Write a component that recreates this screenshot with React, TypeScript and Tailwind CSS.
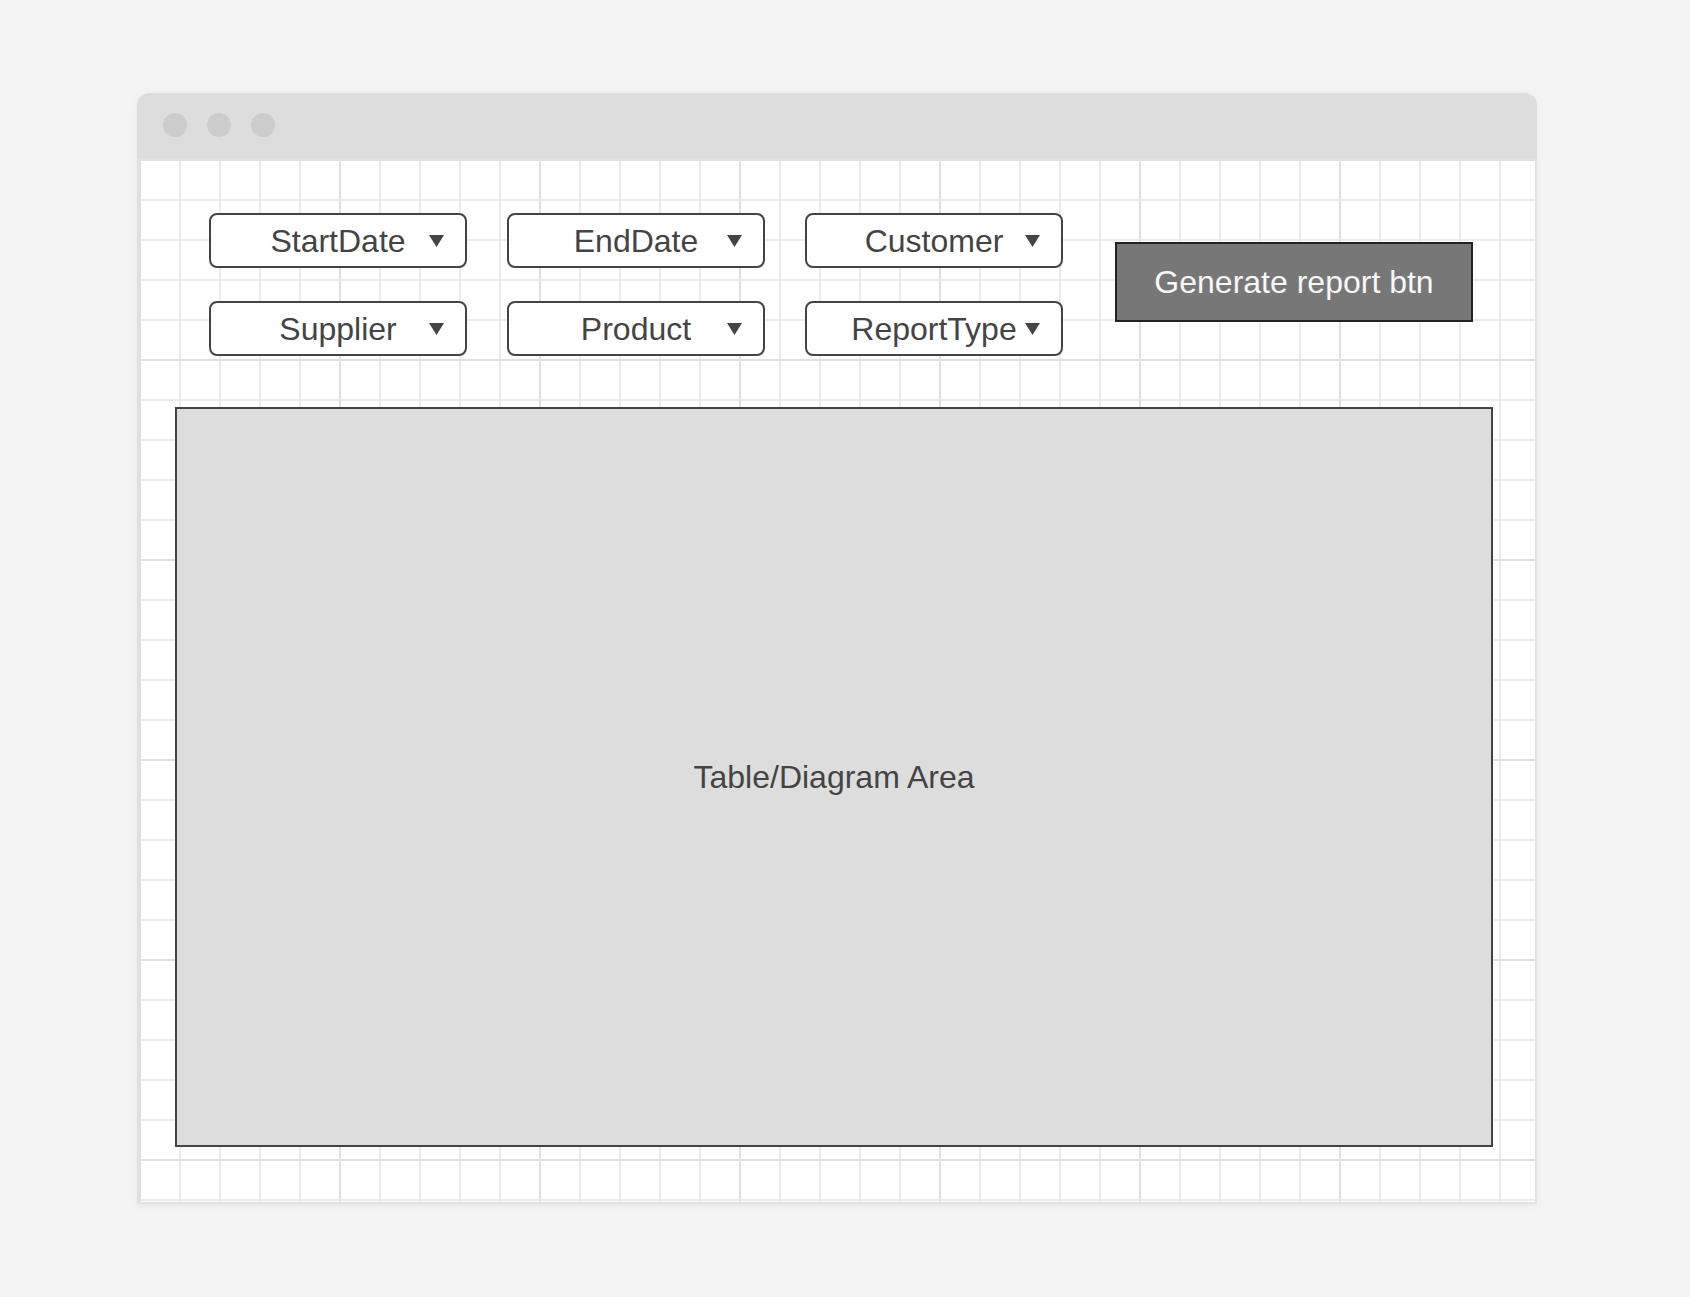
const filters = [
  'StartDate',
  'EndDate',
  'Customer',
  'Supplier',
  'Product',
  'ReportType',
]

function Dropdown({ label }: { label: string }) {
  return (
    <div className="relative flex h-[55px] w-[258px] items-center justify-center rounded-[8px] border-2 border-[#444444] bg-white">
      <span className="text-[32px] leading-none text-[#444444]">{label}</span>
      <svg
        className="absolute right-[21px] top-1/2 -translate-y-1/2"
        width="15"
        height="12"
        viewBox="0 0 15 12"
      >
        <path d="M0 0 H15 L7.5 12 Z" fill="#444444" />
      </svg>
    </div>
  )
}

export default function App() {
  return (
    <div className="min-h-[1297px] w-full bg-[#f4f4f4] pt-[93px] font-['Liberation_Sans',Arial,sans-serif]">
      <div className="ml-[137px] w-[1400px] overflow-hidden rounded-t-[12px] shadow-[0_2px_10px_rgba(0,0,0,0.05)]">
        {/* title bar */}
        <div className="flex h-[66px] items-center gap-[20px] bg-[#dddddd] pb-[2px] pl-[26px]">
          <div className="h-[24px] w-[24px] rounded-full bg-[#cccccc]" />
          <div className="h-[24px] w-[24px] rounded-full bg-[#cccccc]" />
          <div className="h-[24px] w-[24px] rounded-full bg-[#cccccc]" />
        </div>

        {/* canvas */}
        <div className="border-x-2 border-b-2 border-[#e2e2e2] bg-white bg-[linear-gradient(to_right,#e0e0e0_2px,transparent_2px),linear-gradient(to_bottom,#e0e0e0_2px,transparent_2px),linear-gradient(to_right,#ececec_2px,transparent_2px),linear-gradient(to_bottom,#ececec_2px,transparent_2px)] bg-[size:200px_200px,200px_200px,40px_40px,40px_40px] pt-[54px] pb-[55px]">
          <div className="flex items-start pl-[70px]">
            <div className="grid grid-cols-[258px_258px_258px] gap-x-[40px] gap-y-[33px]">
              {filters.map(f => (
                <Dropdown key={f} label={f} />
              ))}
            </div>
            <button className="ml-[52px] mt-[29px] flex h-[80px] w-[358px] items-center justify-center border-2 border-[#222222] bg-[#777777] text-[32px] leading-none text-[#f8f8f8]">
              Generate report btn
            </button>
          </div>

          <div className="ml-[36px] mt-[51px] flex h-[740px] w-[1318px] items-center justify-center border-2 border-[#444444] bg-[#dddddd]">
            <span className="text-[32px] leading-none text-[#444444]">Table/Diagram Area</span>
          </div>
        </div>
      </div>
    </div>
  )
}
